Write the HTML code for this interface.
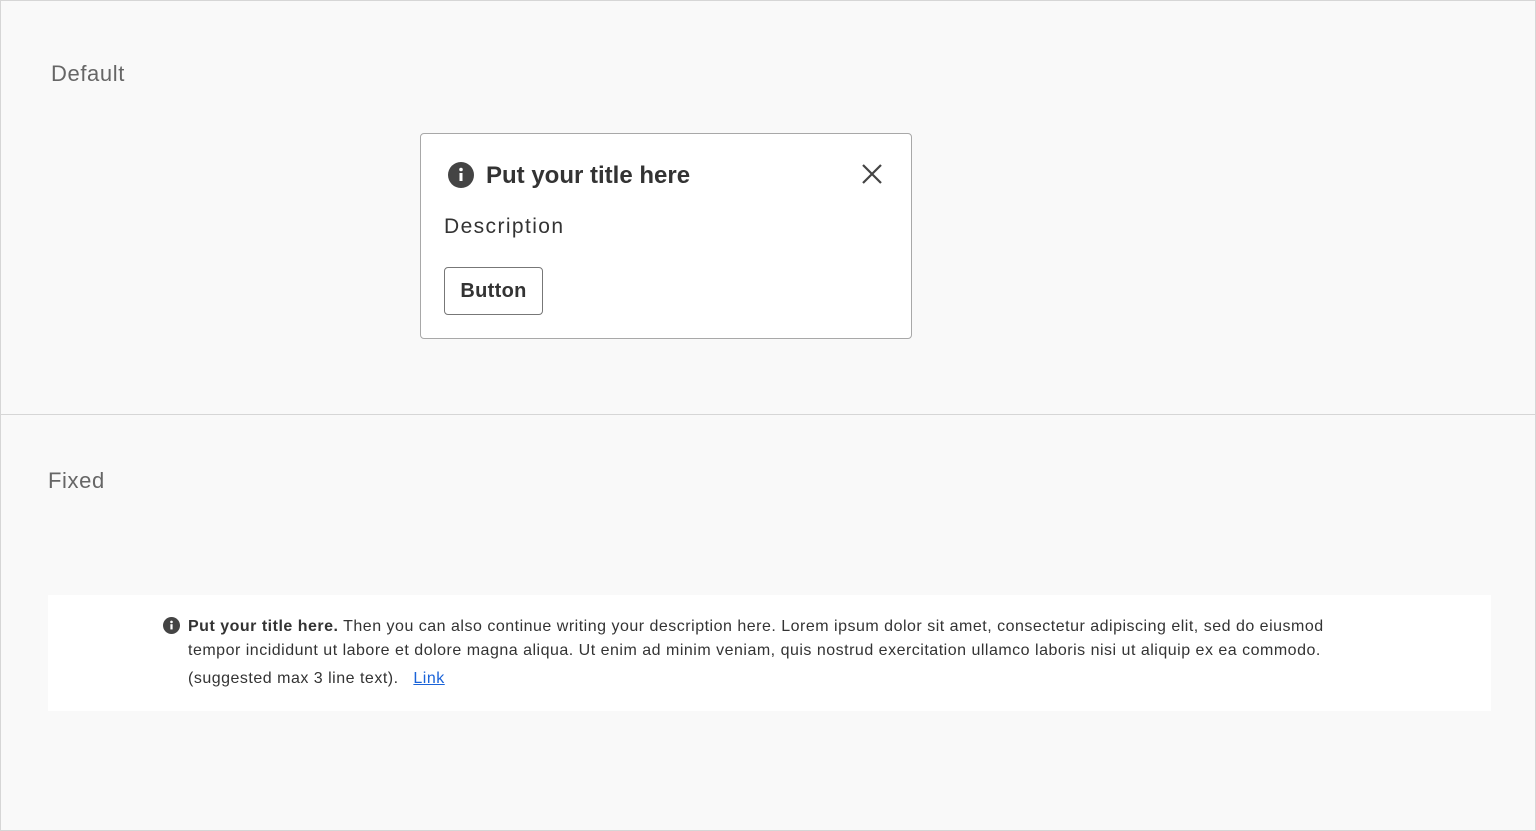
<!DOCTYPE html>
<html><head><style>
*{margin:0;padding:0;box-sizing:border-box}
body{width:1536px;height:831px;background:#f9f9f9;font-family:"Liberation Sans",Arial,sans-serif;position:relative;overflow:hidden;color:#333}
.frame{position:absolute;left:0;top:0;width:1536px;height:831px;border:1px solid #d6d6d6}
.div{position:absolute;left:0;top:414px;width:1536px;height:1px;background:#d6d6d6}
.lab{position:absolute;font-size:22px;color:#666;letter-spacing:0.6px}
.card{position:absolute;left:420px;top:133px;width:492px;height:206px;background:#fff;border:1px solid #a8a8a8;border-radius:4px}
.abs{position:absolute;white-space:nowrap}
.btn{position:absolute;left:23px;top:133px;width:99px;height:48px;border:1px solid #777;border-radius:4px;font-weight:bold;font-size:20px;line-height:46px;text-align:center;color:#333}
.fixed{position:absolute;left:48px;top:595px;width:1443px;height:116px;background:#fff}
.ft{position:absolute;left:140px;font-size:16px;color:#333;white-space:nowrap;letter-spacing:0.5px}
a{color:#1a63d8;text-decoration:underline}
</style></head><body>
<div class="frame"></div>
<div class="div"></div>
<div class="lab" style="left:51px;top:61px">Default</div>
<div class="lab" style="left:48px;top:468px">Fixed</div>
<div class="card">
<svg class="abs" style="left:27px;top:28px" width="26" height="26" viewBox="0 0 26 26"><circle cx="13" cy="13" r="13" fill="#444"/><rect x="11.5" y="11" width="3" height="8" fill="#fff"/><circle cx="13" cy="7.5" r="1.8" fill="#fff"/></svg>
<div class="abs" style="left:65px;top:28px;font-size:24px;font-weight:bold;color:#333">Put your title here</div>
<svg class="abs" style="left:441px;top:30px" width="20" height="20" viewBox="0 0 20 20"><path d="M1 1L19 19M19 1L1 19" stroke="#444" stroke-width="2.2"/></svg>
<div class="abs" style="left:23px;top:81px;font-size:21px;color:#333;letter-spacing:1.4px">Description</div>
<div class="btn" style="letter-spacing:0.3px">Button</div>
</div>
<div class="fixed">
<svg class="abs" style="left:115px;top:22px" width="17" height="17" viewBox="0 0 26 26"><circle cx="13" cy="13" r="13" fill="#444"/><rect x="11.3" y="11" width="3.4" height="8" fill="#fff"/><circle cx="13" cy="7.5" r="2" fill="#fff"/></svg>
<div class="ft" style="top:23px"><b>Put your title here.</b> Then you can also continue writing your description here. Lorem ipsum dolor sit amet, consectetur adipiscing elit, sed do eiusmod</div>
<div class="ft" style="top:47px">tempor incididunt ut labore et dolore magna aliqua. Ut enim ad minim veniam, quis nostrud exercitation ullamco laboris nisi ut aliquip ex ea commodo.</div>
<div class="ft" style="top:75px">(suggested max 3 line text). &nbsp;&nbsp;<a>Link</a></div>
</div>
</body></html>
